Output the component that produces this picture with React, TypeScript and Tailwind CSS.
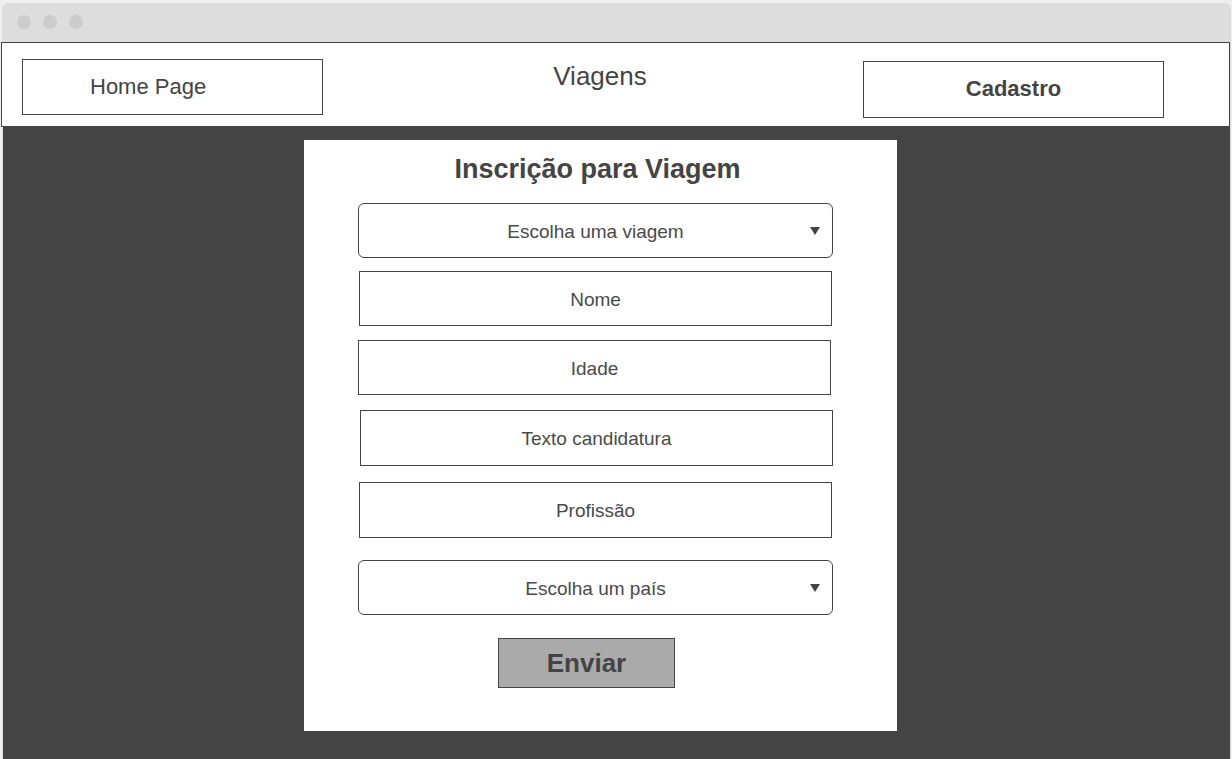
import React from 'react';

const font = { fontFamily: '"Liberation Sans", Arial, sans-serif' };

const Caret: React.FC = () => (
  <svg className="absolute right-[12px] top-[23px]" width="10" height="8" viewBox="0 0 10 8">
    <polygon points="0,0 10,0 5,8" fill="#444444" />
  </svg>
);

type FieldProps = { label: string; className: string; select?: boolean };

const Field: React.FC<FieldProps> = ({ label, className, select }) => (
  <div
    className={`relative flex items-center justify-center pt-[3px] border border-[#444444] bg-white text-[19px] text-[#4a4a4a] ${
      select ? 'rounded-[6px]' : ''
    } ${className}`}
  >
    <span>{label}</span>
    {select && <Caret />}
  </div>
);

export default function App() {
  return (
    <div className="w-[1232px] h-[759px] overflow-hidden bg-[#efefef] pt-[3px]" style={font}>
      <div className="ml-[2px] mr-[1px] h-[756px] rounded-t-[6px] bg-[#dddddd] flex flex-col">
        {/* window chrome */}
        <div className="h-[39px] flex items-center gap-[12px] pl-[15px] pb-[2px] shrink-0">
          <div className="w-[14px] h-[14px] rounded-full bg-[#cccccc]" />
          <div className="w-[14px] h-[14px] rounded-full bg-[#cccccc]" />
          <div className="w-[14px] h-[14px] rounded-full bg-[#cccccc]" />
        </div>

        {/* header */}
        <div className="-ml-px w-[1229px] h-[85px] shrink-0 border border-[#444444] bg-white flex items-start">
          <a className="ml-[20px] mt-[16px] w-[301px] h-[56px] border border-[#444444] flex items-center pl-[67px] pb-[2px] text-[22px] text-[#444444]">
            Home Page
          </a>
          <div className="flex-1 flex justify-center pl-[14px] pt-[18px]">
            <span className="text-[26px] leading-[30px] text-[#444444]">Viagens</span>
          </div>
          <a className="mr-[65px] mt-[18px] w-[301px] h-[57px] border border-[#444444] flex items-center justify-center pb-[2px] text-[22px] font-bold text-[#444444]">
            Cadastro
          </a>
        </div>

        {/* content */}
        <div className="ml-px w-[1227px] flex-1 bg-[#444444] pt-[13px]">
          <div className="ml-[301px] w-[593px] h-[591px] bg-white flex flex-col pt-[14px]">
            <h1 className="text-center pr-[6px] text-[27px] leading-[30px] font-bold text-[#444444]">
              Inscrição para Viagem
            </h1>
            <Field select label="Escolha uma viagem" className="mt-[19px] ml-[54px] w-[475px] h-[55px]" />
            <Field label="Nome" className="mt-[13px] ml-[55px] w-[473px] h-[55px]" />
            <Field label="Idade" className="mt-[14px] ml-[54px] w-[473px] h-[55px]" />
            <Field label="Texto candidatura" className="mt-[15px] ml-[56px] w-[473px] h-[56px]" />
            <Field label="Profissão" className="mt-[16px] ml-[55px] w-[473px] h-[56px]" />
            <Field select label="Escolha um país" className="mt-[22px] ml-[54px] w-[475px] h-[55px]" />
            <button className="mt-[23px] ml-[194px] w-[177px] h-[50px] border border-[#444444] bg-[#aaaaaa] text-[26px] font-bold text-[#444444]">
              Enviar
            </button>
          </div>
        </div>
      </div>
    </div>
  );
}
